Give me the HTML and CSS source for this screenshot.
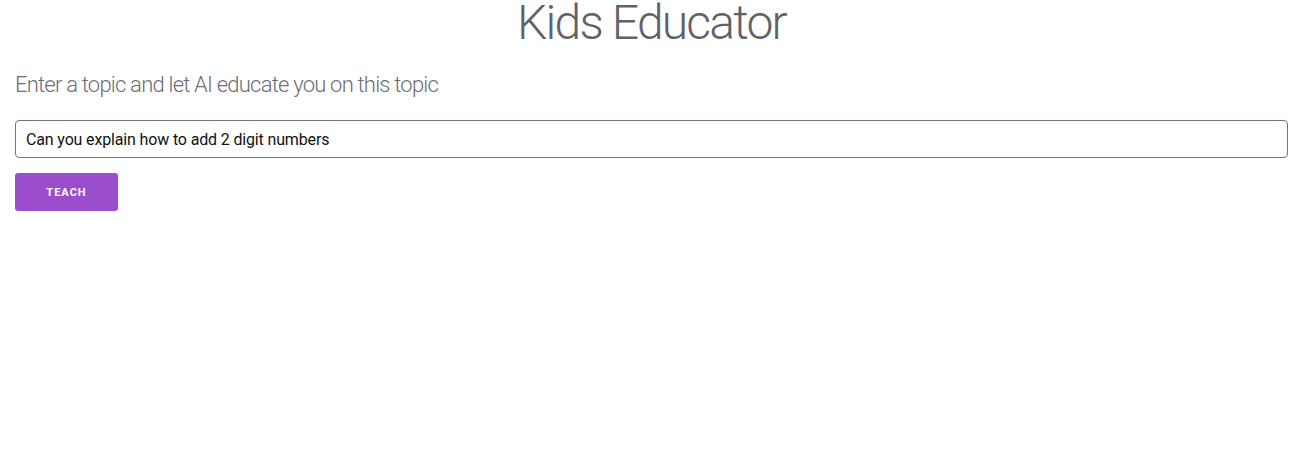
FILE: index.html
```html
<!DOCTYPE html>
<html lang="en">
<head>
<meta charset="utf-8">
<title>Kids Educator</title>
<link rel="stylesheet" href="styles.css">
</head>
<body>
<main class="page">
  <h1 class="title">Kids Educator</h1>
  <p class="lead">Enter a topic and let AI educate you on this topic</p>
  <input class="topic" type="text" value="Can you explain how to add 2 digit numbers" autofocus>
  <button class="teach" type="button">Teach</button>
</main>
</body>
</html>
```

FILE: styles.css
```css
html, body {
  margin: 0;
  padding: 0;
  background: #ffffff;
}
body {
  font-family: Roboto, "Noto Sans", sans-serif;
}
.page {
  display: flex;
  flex-direction: column;
  align-items: flex-start;
  padding: 0 14px 0 15px;
}
.title {
  align-self: stretch;
  text-align: center;
  margin: 0;
  font-size: 48px;
  font-weight: 300;
  line-height: 46px;
  letter-spacing: -1.8px;
  color: #5f6368;
}
.lead {
  margin: 26px 0 0;
  font-size: 22px;
  font-weight: 300;
  line-height: 26px;
  letter-spacing: -0.78px;
  color: #6b6e72;
}
.topic {
  box-sizing: border-box;
  align-self: stretch;
  margin-top: 22px;
  height: 38px;
  padding: 0 10px;
  border: 1px solid #7d6a8e;
  border-radius: 4px;
  font-family: Roboto, sans-serif;
  font-size: 16px;
  letter-spacing: -0.15px;
  color: #111111;
  outline: none;
  caret-color: #000;
}
.teach {
  margin-top: 15px;
  width: 103px;
  height: 38px;
  border: none;
  border-radius: 3px;
  background: #9c4dcc;
  color: #ffffff;
  font-family: Roboto, sans-serif;
  font-weight: 700;
  font-size: 11px;
  letter-spacing: 1px;
  text-transform: uppercase;
  cursor: pointer;
}
```
